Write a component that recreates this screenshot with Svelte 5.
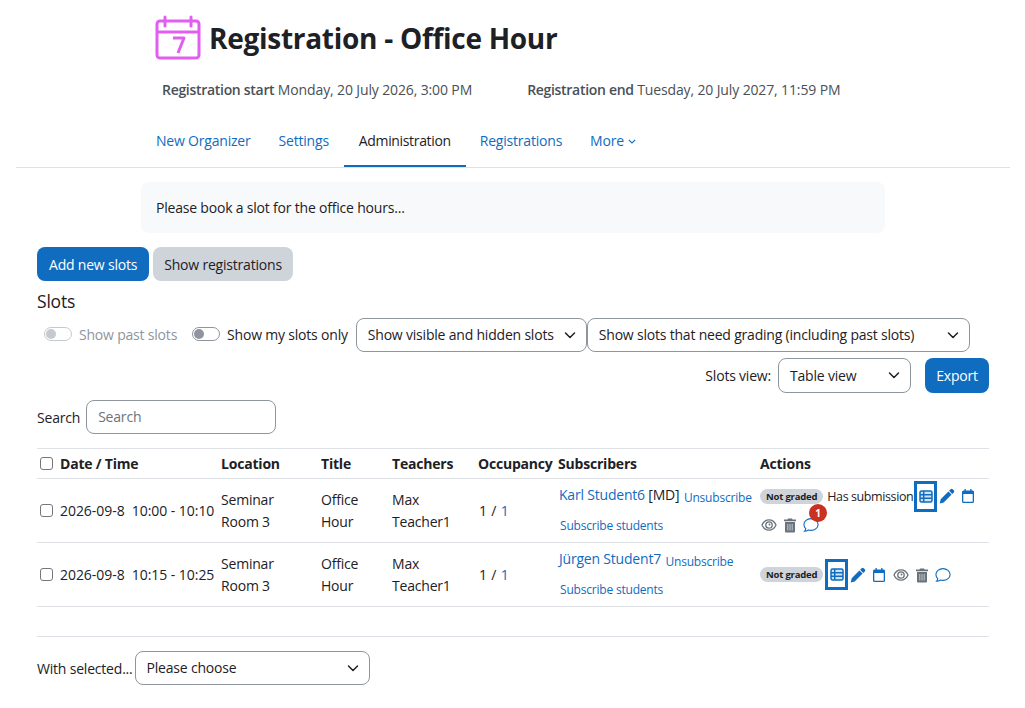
<script lang="ts">
    const rows = [
        { time: '10:00 - 10:10', student: 'Karl Student6', tag: ' [MD]', first: true },
        { time: '10:15 - 10:25', student: 'Jürgen Student7', tag: '', first: false }
    ];
</script>

{#snippet tableIcon()}
    <svg class="ico" viewBox="0 0 14 13" width="14" height="13">
        <rect x="1" y="1" width="12" height="11" rx="1.500" fill="#cfe2f3" stroke="#0f6cbf" stroke-width="1.500"/>
        <path stroke="#0f6cbf" stroke-width="1.500" d="M1 4.700h12M1 8.300h12M4.700 1v11"/>
    </svg>
{/snippet}
{#snippet pen()}
    <svg class="ico" viewBox="0 0 16 16" width="16" height="16"><path fill="#0f6cbf" d="M11.600 1.200a1.500 1.500 0 0 1 2.100 0l1.100 1.100a1.500 1.500 0 0 1 0 2.100l-1.500 1.500-3.200-3.200zM9.400 3.400l3.200 3.200-7.900 7.900-4 1 1-4.200z"/></svg>
{/snippet}
{#snippet cal()}
    <svg class="ico" viewBox="0 0 16 16" width="16" height="16"><path fill="#0f6cbf" d="M4.500 1h1.300v1.500h4.400V1h1.300v1.500h.5A1.500 1.500 0 0 1 14 4v9.500a1.500 1.500 0 0 1-1.500 1.500h-9A1.500 1.500 0 0 1 2 13.500V4a1.500 1.500 0 0 1 1.500-1.500h1zM3.300 6v7.500c0 .1.100.2.200.2h9c.1 0 .2-.1.200-.2V6z"/></svg>
{/snippet}
{#snippet eye()}
    <svg class="ico eye" viewBox="0 0 16 16" width="16" height="16"><path fill="none" stroke="#6a737b" stroke-width="1.300" d="M1 8C2.600 4.400 5 2.900 8 2.900s5.400 1.500 7 5.100c-1.600 3.600-4 5.100-7 5.100S2.600 11.600 1 8z"/><circle cx="8" cy="8" r="3.200" fill="none" stroke="#6a737b" stroke-width="1.300"/><circle cx="8.500" cy="7.500" r="1" fill="#6a737b"/></svg>
{/snippet}
{#snippet trash()}
    <svg class="ico" viewBox="0 0 16 16" width="16" height="16"><path fill="#6a737b" d="M6 1.500h4l.5 1H14v1.800H2V2.500h3.500zM3 5h10v9.500a1 1 0 0 1-1 1H4a1 1 0 0 1-1-1z"/><path stroke="#c3c8cd" stroke-width="1" d="M5.800 7v6.500M8 7v6.500M10.200 7v6.500"/></svg>
{/snippet}
{#snippet bubble()}
    <svg class="ico" viewBox="0 0 16 16" width="16" height="16"><path fill="none" stroke="#0f6cbf" stroke-width="1.100" d="M8 1.600c3.900 0 7.100 2.700 7.100 5.900s-3.200 5.900-7.100 5.900c-.9 0-1.800-.1-2.600-.4-1 .8-2.400 1.300-3.900 1.300.7-.7 1.200-1.600 1.300-2.500C1.600 10.500.9 9.100.9 7.500c0-3.200 3.200-5.900 7.100-5.900z"/></svg>
{/snippet}
{#snippet caret()}
    <svg class="caret" viewBox="0 0 16 16" width="16" height="16"><path fill="none" stroke="#1d2125" stroke-width="1.500" stroke-linecap="round" stroke-linejoin="round" d="M3.500 6l4.500 4.500L12.500 6"/></svg>
{/snippet}

<div class="page">
    <header class="head">
        <svg class="logo" viewBox="0 0 46 46" width="46" height="46">
            <path fill="none" stroke="#e05ef0" stroke-width="3" stroke-linejoin="round" d="M5 6h36a3 3 0 0 1 3 3v31a3 3 0 0 1-3 3H5a3 3 0 0 1-3-3V9a3 3 0 0 1 3-3zM2 17h42"/>
            <path fill="none" stroke="#e05ef0" stroke-width="3" stroke-linecap="round" d="M10 2v9M36 2v9"/>
            <path fill="none" stroke="#e05ef0" stroke-width="3" stroke-linejoin="round" d="M18 23h11l-6 15"/>
        </svg>
        <h1>Registration - Office Hour</h1>
    </header>

    <div class="dates">
        <div><b>Registration start</b> Monday, 20 July 2026, 3:00 PM</div>
        <div><b>Registration end</b> Tuesday, 20 July 2027, 11:59 PM</div>
    </div>

    <nav class="tabs">
        <a href="#a">New Organizer</a>
        <a href="#a">Settings</a>
        <a href="#a" class="active">Administration</a>
        <a href="#a">Registrations</a>
        <a href="#a">More
            <svg class="more" viewBox="0 0 8 5" width="8" height="5"><path fill="none" stroke="#0f6cbf" stroke-width="1.100" d="M.8.8L4 4l3.200-3.200"/></svg>
        </a>
    </nav>

    <div class="notice">Please book a slot for the office hours...</div>

    <main class="body">
        <div class="btns">
            <button class="btn primary">Add new slots</button>
            <button class="btn grey">Show registrations</button>
        </div>
        <h2>Slots</h2>
        <div class="filters">
            <span class="toggle off"><i></i></span><span class="muted">Show past slots</span>
            <span class="toggle mine"><i></i></span><span class="lab">Show my slots only</span>
            <div class="select f1">Show visible and hidden slots {@render caret()}</div>
            <div class="select f2">Show slots that need grading (including past slots) {@render caret()}</div>
        </div>
        <div class="viewrow">
            <span>Slots view:</span>
            <div class="select f3">Table view {@render caret()}</div>
            <button class="btn primary export">Export</button>
        </div>
        <div class="search">
            <span>Search</span>
            <div class="input">Search</div>
        </div>

        <div class="grid th">
            <div class="c1"><span class="check"></span>Date / Time</div>
            <div>Location</div>
            <div>Title</div>
            <div>Teachers</div>
            <div>Occupancy</div>
            <div>Subscribers</div>
            <div>Actions</div>
        </div>
        {#each rows as r}
            <div class="grid row">
                <div class="c1 when"><span class="check"></span>2026-09-8&nbsp; {r.time}</div>
                <div class="two">Seminar<br />Room 3</div>
                <div class="two">Office<br />Hour</div>
                <div class="two">Max<br />Teacher1</div>
                <div class="occ">1 / <a href="#a">1</a></div>
                <div class="subs">
                    <div><a href="#a" class="name">{r.student}</a>{r.tag} <a href="#a" class="small un">Unsubscribe</a></div>
                    <div class="sub2"><a href="#a" class="small">Subscribe students</a></div>
                </div>
                <div class="actions" class:wrapped={r.first}>
                    <span class="badge">Not graded</span>
                    {#if r.first}<span class="hassub">Has submission</span>{/if}
                    <span class="boxed">{@render tableIcon()}</span>
                    {@render pen()}
                    {@render cal()}
                    {@render eye()}
                    {@render trash()}
                    <span class="bub">{@render bubble()}{#if r.first}<em>1</em>{/if}</span>
                </div>
            </div>
        {/each}

        <div class="withsel">
            <span>With selected...</span>
            <div class="select f4">Please choose {@render caret()}</div>
        </div>
    </main>
</div>

<style>
    :global(body) {
        margin: 0;
        background: #fff;
    }

    .page {
        width: 1025px;
        height: 708px;
        overflow: hidden;
        font-family: 'Open Sans', 'Noto Sans', sans-serif;
        font-size: 14px;
        letter-spacing: -0.2px;
        color: #1d2125;
    }

    a {
        color: #0f6cbf;
        text-decoration: none;
    }

    .head {
        display: flex;
        align-items: center;
        gap: 8px;
        padding: 15px 0 0 155px;
        height: 46px;
    }

    h1 {
        margin: 0;
        font-size: 28px;
        font-weight: 700;
        letter-spacing: -0.28px;
        line-height: 46px;
    }

    .dates {
        display: flex;
        gap: 55px;
        padding: 20px 0 0 162px;
        color: #495057;
        line-height: 18px;
        letter-spacing: -0.13px;
    }

    .dates b {
        font-weight: 600;
        letter-spacing: -0.3px;
    }

    .tabs {
        display: flex;
        margin: 23px 15px 0 16px;
        padding-left: 126px;
        border-bottom: 1px solid #dee2e6;
    }

    .tabs a {
        padding: 10px 14px 17px;
        line-height: 18px;
    }

    .tabs a.active {
        color: #1d2125;
        letter-spacing: -0.35px;
        margin-left: 1px;
        padding: 10px 15px 15px;
        border-bottom: 2px solid #0f6cbf;
    }

    .more {
        margin: 0 0 2px 1px;
    }

    .notice {
        margin: 14px 140px 0 141px;
        padding: 16px 15px;
        height: 19px;
        line-height: 19px;
        background: #f8f9fa;
        border-radius: 8px;
    }

    .body {
        padding: 14px 36px 0 37px;
    }

    .btns {
        display: flex;
        gap: 4px;
    }

    .btn {
        font: inherit;
        letter-spacing: inherit;
        border: 0;
        border-radius: 8px;
        height: 34px;
        padding: 0 12px;
    }

    .primary {
        background: #0f6cbf;
        color: #fff;
    }

    .grey {
        background: #ced4da;
        color: #1d2125;
        padding: 0 11px;
    }

    h2 {
        margin: 8px 0 0;
        font-size: 17.500px;
        font-weight: 400;
        line-height: 24px;
    }

    .filters {
        display: flex;
        align-items: center;
        height: 34px;
        margin-top: 5px;
    }

    .toggle {
        position: relative;
        display: inline-block;
        box-sizing: border-box;
        width: 28px;
        height: 14px;
        border: 1px solid #8f959e;
        border-radius: 7px;
        margin-right: 7px;
        margin-bottom: 3px;
    }

    .toggle i {
        position: absolute;
        left: 1px;
        top: 1px;
        width: 10px;
        height: 10px;
        border-radius: 50%;
        background: #8f959e;
    }

    .toggle.off {
        margin-left: 7px;
        opacity: 0.5;
    }

    .toggle.mine {
        margin-left: 15px;
    }

    .muted {
        color: #8f959e;
        margin-bottom: 2px;
    }

    .lab {
        margin-right: 8px;
        margin-bottom: 2px;
    }

    .select {
        position: relative;
        box-sizing: border-box;
        height: 34px;
        line-height: 32px;
        border: 1px solid #8f959e;
        border-radius: 8px;
        padding-left: 11px;
        background: #fff;
        white-space: nowrap;
    }

    .caret {
        position: absolute;
        right: 8px;
        top: 8px;
    }

    .f1 {
        width: 231px;
    }

    .f2 {
        width: 383px;
    }

    .f3 {
        width: 133px;
        height: 35px;
        line-height: 34px;
    }

    .f4 {
        width: 235px;
    }

    .viewrow {
        display: flex;
        align-items: center;
        justify-content: flex-end;
        gap: 7px;
        margin-top: 6px;
        height: 35px;
    }

    .export {
        box-sizing: border-box;
        width: 64px;
        height: 35px;
        margin-left: 7px;
        padding: 0;
    }

    .search {
        display: flex;
        align-items: center;
        gap: 6px;
        margin-top: 7px;
    }

    .input {
        box-sizing: border-box;
        width: 190px;
        height: 34px;
        line-height: 32px;
        padding-left: 11px;
        border: 1px solid #8f959e;
        border-radius: 8px;
        color: #6a737b;
    }

    .grid {
        display: grid;
        grid-template-columns: 184px 100px 71px 86px 80px 202px 229px;
        align-items: center;
        border-bottom: 1px solid #dee2e6;
    }

    .th {
        margin-top: 14px;
        border-top: 1px solid #dee2e6;
        height: 29px;
        font-weight: 700;
    }

    .row {
        height: 63px;
    }

    .c1 {
        display: flex;
        align-items: center;
        white-space: pre;
    }

    .when {
        letter-spacing: -0.05px;
    }

    .check {
        box-sizing: border-box;
        width: 13px;
        height: 13px;
        border: 1px solid #767676;
        border-radius: 3px;
        margin: 0 7px 0 3px;
    }

    .two {
        line-height: 22px;
    }

    .occ {
        padding-left: 1px;
        word-spacing: 1px;
    }

    .subs {
        align-self: start;
        padding: 6px 0 0 1px;
    }

    .small {
        font-size: 12px;
    }

    .un {
        margin-left: 1px;
        vertical-align: -2px;
    }

    .sub2 {
        margin: 9px 0 0 1px;
    }

    .actions {
        display: flex;
        flex-wrap: wrap;
        align-items: center;
        column-gap: 5px;
        row-gap: 5px;
    }

    .wrapped {
        padding-bottom: 8px;
    }

    .badge {
        background: #ced4da;
        border-radius: 8px;
        font-size: 9.500px;
        font-weight: 700;
        line-height: 15px;
        padding: 0 6px;
    }

    .hassub {
        font-size: 12.500px;
        letter-spacing: -0.4px;
        margin: 0 -1px;
    }

    .boxed {
        display: inline-flex;
        align-items: center;
        justify-content: center;
        box-sizing: border-box;
        width: 23px;
        height: 31px;
        margin: 0 -3px 0 -3px;
        border: 3px solid #0f6cbf;
    }

    .eye {
        margin-left: 1px;
    }

    .bub {
        position: relative;
        display: inline-flex;
    }

    .bub em {
        position: absolute;
        left: 6px;
        top: -13px;
        width: 18px;
        height: 18px;
        line-height: 18px;
        border-radius: 50%;
        background: #ca3120;
        color: #fff;
        font-size: 10px;
        font-style: normal;
        font-weight: 700;
        text-align: center;
    }

    .withsel {
        display: flex;
        align-items: center;
        gap: 2px;
        margin-top: 29px;
        padding-top: 14px;
        border-top: 1px solid #dee2e6;
    }
</style>
